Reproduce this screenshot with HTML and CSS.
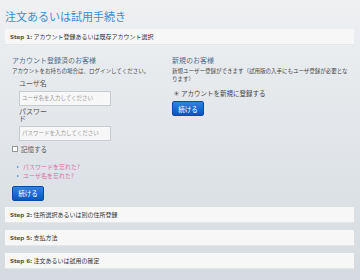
FILE: index.html
```html
<!DOCTYPE html>
<html lang="ja">
  <head>
    <meta charset="UTF-8" />
    <meta name="viewport" content="width=device-width, initial-scale=1.0" />
    <title>注文あるいは試用手続き</title>
    <link rel="stylesheet" href="styles.css">
  </head>
  <body>
    <div class="checkout">
      <h1 class="page-title">注文あるいは試用手続き</h1>

      <div class="step step-open">
        <div class="step-head"><b>Step 1:</b> アカウント登録あるいは既存アカウント選択</div>
      </div>
      <div class="step-body">
        <div class="col">
          <h3 class="col-title">アカウント登録済のお客様</h3>
          <p class="col-text">アカウントをお持ちの場合は、ログインしてください。</p>
          <form class="login">
            <div class="form-group">
              <label for="user">ユーザ名</label>
              <input type="text" id="user" placeholder="ユーザ名を入力してください" />
            </div>
            <div class="form-group">
              <label for="pass">パスワード</label>
              <input type="password" id="pass" placeholder="パスワードを入力してください" />
            </div>
          </form>
          <label class="remember"><span class="box"></span>記憶する</label>
          <ul class="links">
            <li><a href="#">パスワードを忘れた?</a></li>
            <li><a href="#">ユーザ名を忘れた?</a></li>
          </ul>
          <button class="btn">続ける</button>
        </div>
        <div class="col">
          <h3 class="col-title">新規のお客様</h3>
          <p class="col-text">新規ユーザー登録ができます（試用版の入手にもユーザ登録が必要となります）</p>
          <label class="radio"><span class="dot"></span>アカウントを新規に登録する</label>
          <button class="btn">続ける</button>
        </div>
      </div>

      <div class="step">
        <div class="step-head"><b>Step 2:</b> 住所選択あるいは別の住所登録</div>
      </div>
      <div class="step">
        <div class="step-head"><b>Step 5:</b> 支払方法</div>
      </div>
      <div class="step">
        <div class="step-head"><b>Step 6:</b> 注文あるいは試用の確定</div>
      </div>
    </div>
  </body>
</html>
```

FILE: styles.css
```css
html,
body {
  height: 100%;
}

body {
  margin: 0;
  font-family: "Noto Sans CJK JP", "Noto Sans", sans-serif;
  background: linear-gradient(#eef0f2, #d5dbe0);
  color: #444;
}

.checkout {
  padding: 8px 6px 0 5px;
}

.page-title {
  margin: 0 0 5px;
  font-size: 11px;
  line-height: 16px;
  font-weight: normal;
  color: #3c8fd2;
}

.step {
  margin-bottom: 7px;
}

.step-head {
  height: 15px;
  line-height: 15px;
  padding: 0 5px;
  background: #f7f7f7;
  border-bottom: 1px solid #e4e7ea;
  font-size: 6px;
  color: #333;
}

.step-head b {
  font-family: "DejaVu Sans", sans-serif;
  font-size: 5.5px;
  color: #555;
}

.step-open {
  margin-bottom: 0;
}

.step-body {
  display: grid;
  grid-template-columns: 160px 1fr;
  padding: 9px 6px 6px 7px;
}

.col-title {
  margin: 0;
  font-size: 7px;
  line-height: 12px;
  font-weight: normal;
  color: #4d6f8f;
}

.col-text {
  margin: 1px 0 0;
  font-size: 5.5px;
  line-height: 8px;
  color: #444;
}

.login {
  padding-left: 7px;
  margin-top: 5px;
}

.form-group label {
  display: block;
  width: 30px;
  font-size: 7px;
  line-height: 7.5px;
  color: #555;
  margin-bottom: 3px;
}

.form-group input {
  display: block;
  width: 92px;
  height: 15px;
  box-sizing: border-box;
  padding: 0 2px;
  border: 1px solid #c8ccd0;
  background: #f7f7f7;
  font-family: inherit;
  font-size: 5.5px;
  margin-bottom: 2px;
}

.form-group input::placeholder {
  color: #999;
}

.remember {
  display: flex;
  align-items: center;
  gap: 3px;
  margin-top: 3px;
  font-size: 6.5px;
  color: #555;
}

.box {
  width: 4px;
  height: 4px;
  border: 1px solid #999;
  background: #fff;
}

.links {
  list-style: none;
  margin: 8px 0 0;
  padding: 0 0 0 5px;
}

.links li {
  font-size: 6px;
  line-height: 9.5px;
}

.links li::before {
  content: "";
  display: inline-block;
  border-left: 2.5px solid #3a8ad8;
  border-top: 1.5px solid transparent;
  border-bottom: 1.5px solid transparent;
  margin-right: 4px;
  vertical-align: 1px;
}

.links a {
  color: #de6aa3;
  text-decoration: none;
}

.btn {
  display: block;
  width: 32px;
  height: 15px;
  margin-top: 5px;
  padding: 0;
  border: 1px solid #0a4aa8;
  border-radius: 2px;
  background: linear-gradient(#2c83e6, #0a55c2);
  color: #fff;
  font-family: inherit;
  font-size: 6.5px;
  cursor: pointer;
}

.radio {
  display: flex;
  align-items: center;
  gap: 2px;
  margin-top: 5px;
  padding-left: 2px;
  font-size: 6.5px;
  color: #444;
}

.radio + .btn {
  margin-top: 3px;
}

.dot {
  width: 3px;
  height: 3px;
  border: 1px solid #bbb;
  border-radius: 50%;
  background: radial-gradient(#555 40%, #eee 60%);
}
```
